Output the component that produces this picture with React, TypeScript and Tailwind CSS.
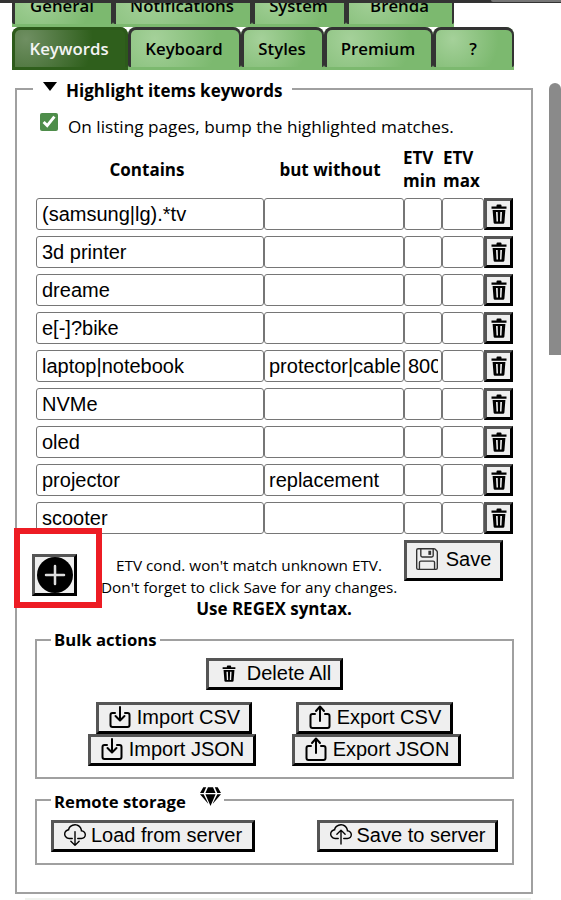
import type { ReactNode } from 'react';
import { BsCloudDownload, BsCloudUpload, BsFloppy } from 'react-icons/bs';
import { FaGem } from 'react-icons/fa';

const topTabs = [
  { label: 'General', width: 'w-[101px]' },
  { label: 'Notifications', width: 'w-[139px]' },
  { label: 'System', width: 'w-[94px]' },
  { label: 'Brenda', width: 'w-[108px]' },
];

const mainTabs = [
  { label: 'Keywords', width: 'w-[116px]', active: true },
  { label: 'Keyboard', width: 'w-[113px]' },
  { label: 'Styles', width: 'w-[83px]' },
  { label: 'Premium', width: 'w-[109px]' },
  { label: '?', width: 'w-[81px]' },
];

const keywords = [
  { contains: '(samsung|lg).*tv' },
  { contains: '3d printer' },
  { contains: 'dreame' },
  { contains: 'e[-]?bike' },
  { contains: 'laptop|notebook', without: 'protector|cable', min: '800' },
  { contains: 'NVMe' },
  { contains: 'oled' },
  { contains: 'projector', without: 'replacement' },
  { contains: 'scooter' },
];

function Tab({ label, width, active, height }: { label: string; width: string; active?: boolean; height: string }) {
  return (
    <div className={`${width} ${height} shrink-0 rounded-t-lg ${active ? 'bg-[#2f5f1c]' : 'bg-[#7cb96f]'}`}>
      <div
        className={
          active
            ? 'flex h-[calc(100%-3px)] items-center justify-center rounded-t-lg rounded-b-[2px] border-x-[3px] border-t-[3px] border-[#2c5a1a] bg-[radial-gradient(circle_at_10%_25%,#6f8f62,#2f5f1c_65%)] pr-[2px] text-[16.8px] font-semibold text-[#f4f4f4]'
            : 'flex h-[calc(100%-3px)] items-center justify-center rounded-t-lg rounded-b-[2px] border-r-[2px] border-l-[3px] border-t-[3px] border-[#333] bg-[radial-gradient(circle_at_22%_25%,#a5d19a,#7cb96f_70%)] pr-[2px] text-[16.8px] font-semibold text-black'
        }
      >
        {label}
      </div>
    </div>
  );
}

function Btn({ className, children }: { className: string; children: ReactNode }) {
  return (
    <button className={`flex shrink-0 items-center justify-center gap-[5px] border-[3px] border-t-[#555] border-r-black border-b-black border-l-[#555] bg-[#efefef] font-['Liberation_Sans',sans-serif] text-[20px] leading-none text-black ${className}`}>
      {children}
    </button>
  );
}

function TrashIcon({ className }: { className: string }) {
  return (
    <svg viewBox="0 0 16 20" className={className} fill="black">
      <path d="M5.5 1.5Q5.5 0.5 6.5 0.5H9.5Q10.5 0.5 10.5 1.5V2.5H15.5V4.8H0.5V2.5H5.5Z" />
      <path fillRule="evenodd" d="M1.6 6H14.4L13.4 18.5Q13.3 19.8 12 19.8H4Q2.7 19.8 2.6 18.5ZM5 8L5.5 17.5H7L6.7 8ZM9.3 8L9 17.5H10.5L11 8Z" />
    </svg>
  );
}

function ImportIcon() {
  return (
    <svg viewBox="0 0 24 24" className="size-[24px]" fill="none" stroke="black" strokeWidth="2" strokeLinecap="round" strokeLinejoin="round">
      <path d="M7 8H4.5A2 2 0 0 0 2.5 10V20A2 2 0 0 0 4.5 22H19.5A2 2 0 0 0 21.500 20V10A2 2 0 0 0 19.500 8H17" />
      <path d="M12 2V15M7.500 11L12 15.500L16.500 11" />
    </svg>
  );
}

function ExportIcon() {
  return (
    <svg viewBox="0 0 24 24" className="size-[24px]" fill="none" stroke="black" strokeWidth="2" strokeLinecap="round" strokeLinejoin="round">
      <path d="M7 9H4.500A2 2 0 0 0 2.500 11V21A2 2 0 0 0 4.500 23H19.500A2 2 0 0 0 21.500 21V11A2 2 0 0 0 19.500 9H17" />
      <path d="M12 16V2M8 6L12 1.500L16 6" />
    </svg>
  );
}

export default function App() {
  return (
    <div className="relative h-[900px] w-[561px] overflow-hidden bg-white font-['Open_Sans',sans-serif] text-black">
      {/* browser edge */}
      <div className="absolute top-0 left-0 h-[3px] w-full bg-[#333]" />
      <div className="absolute top-0 right-0 h-[2px] w-[70px] rounded-bl bg-[#777]" />

      {/* Tabs */}
      <div className="ml-[12px] flex h-[27px] items-end">
        {topTabs.map((tab) => (
          <Tab key={tab.label} label={tab.label} width={tab.width} height="h-[43px]" />
        ))}
      </div>
      <div className="ml-[12px] flex">
        {mainTabs.map((tab) => (
          <Tab key={tab.label} label={tab.label} width={tab.width} active={tab.active} height="h-[43px]" />
        ))}
      </div>

      {/* Keywords */}
      <fieldset className="mt-[7px] ml-[15px] h-[817px] w-[518px] border-2 border-[#a0a0a0]">
        <legend className="ml-[16px] flex h-[24px] items-center px-[10px] text-[17px] font-bold">
          <svg viewBox="0 0 14 9" className="mr-[9px] mb-[5px] h-[9px] w-[14px]">
            <path d="M0 0H14L7 9Z" fill="black" />
          </svg>
          <span className="pt-[4px]">Highlight items keywords</span>
        </legend>

        <div className="mt-[12px] ml-[23px] flex h-[22px] items-center gap-[10px] text-[17.2px]">
          <input type="checkbox" defaultChecked className="mb-[4px] size-[18px] accent-[#4e8d4a]" />
          <span className="pt-[6px]">On listing pages, bump the highlighted matches.</span>
        </div>

        <div className="mt-[10px] ml-[19px] grid h-[48px] grid-cols-[222px_144px_41px_42px] items-center text-center text-[17px] leading-[23px] font-bold">
          <div>Contains</div>
          <div>but without</div>
          <div className="pl-[1px] text-left">ETV<br />min</div>
          <div className="text-left">ETV<br />max</div>
        </div>

        <div className="mt-[5px] ml-[19px] flex flex-col gap-[6px]">
          {keywords.map((row) => (
            <div key={row.contains} className="grid h-[32px] grid-cols-[228px_140px_38px_42px_29px]">
              <input readOnly defaultValue={row.contains} className="min-w-0 rounded-[3px] border border-[#767676] pr-[2px] pl-[5px] font-['Liberation_Sans',sans-serif] text-[20px]" />
              <input readOnly defaultValue={row.without ?? ''} className="min-w-0 rounded-[3px] border border-[#767676] pr-[1px] pl-[4px] font-['Liberation_Sans',sans-serif] text-[20px]" />
              <input readOnly defaultValue={row.min ?? ''} className="min-w-0 rounded-[3px] border border-[#767676] px-[3px] font-['Liberation_Sans',sans-serif] text-[20px]" />
              <input readOnly className="min-w-0 rounded-[3px] border border-[#767676]" />
              <Btn className="w-[29px]">
                <TrashIcon className="h-[20px] w-[16px]" />
              </Btn>
            </div>
          ))}
        </div>

        <div className="flex h-[64px] items-start">
          <Btn className="mt-[20px] ml-[15px] h-[42px] w-[45px]">
            <svg viewBox="0 0 36 36" className="size-[36px]">
              <circle cx="18" cy="18" r="18" fill="black" />
              <path d="M18 9V27M9 18H27" stroke="#dddddd" strokeWidth="2.500" strokeLinecap="round" />
            </svg>
          </Btn>
          <div className="mt-[20px] ml-[24px] w-[296px] text-center text-[15.3px] leading-[22px] whitespace-nowrap">
            ETV cond. won't match unknown ETV.<br />
            Don't forget to click Save for any changes.
          </div>
          <Btn className="mt-[6px] ml-[7px] h-[41px] w-[99px] gap-[8px] pb-[4px]">
            <BsFloppy className="size-[22px] text-[#333]" />
            Save
          </Btn>
        </div>
        <div className="text-center text-[17px] leading-[22px] font-bold">Use REGEX syntax.</div>

        {/* Bulk actions */}
        <fieldset className="mt-[9px] ml-[18px] w-[479px] border-2 border-[#a0a0a0] pb-[11px]">
          <legend className="ml-[14px] flex h-[22px] items-center px-[3px] text-[16.7px] font-bold">Bulk actions</legend>
          <Btn className="mx-auto mt-[7px] h-[32px] w-[137px] gap-[11px] pb-[2px] pl-[4px]">
            <TrashIcon className="h-[17px] w-[14px]" />
            Delete All
          </Btn>
          <div className="mt-[12px] flex">
            <Btn className="ml-[59px] h-[32px] w-[156px] pb-[2px]"><ImportIcon />Import CSV</Btn>
            <Btn className="ml-[44px] h-[32px] w-[157px] pb-[2px]"><ExportIcon />Export CSV</Btn>
          </div>
          <div className="mt-[0px] flex">
            <Btn className="ml-[51px] h-[32px] w-[168px] pb-[2px]"><ImportIcon />Import JSON</Btn>
            <Btn className="ml-[36px] h-[32px] w-[169px] pb-[2px]"><ExportIcon />Export JSON</Btn>
          </div>
        </fieldset>

        {/* Remote storage */}
        <fieldset className="mt-[10px] ml-[18px] w-[479px] border-2 border-[#a0a0a0] pb-[11px]">
          <legend className="ml-[14px] flex h-[22px] items-center px-[3px] text-[16.7px] font-bold">
            <span className="pt-[3px]">Remote storage</span>
            <FaGem className="mb-[8px] ml-[14px] size-[21px]" />
          </legend>
          <div className="mt-[9px] flex">
            <Btn className="ml-[14px] h-[32px] w-[204px] pb-[2px]"><BsCloudDownload className="size-[22px]" />Load from server</Btn>
            <Btn className="ml-[62px] h-[32px] w-[181px] pb-[2px]"><BsCloudUpload className="size-[22px]" />Save to server</Btn>
          </div>
        </fieldset>
      </fieldset>

      {/* annotation around the add button */}
      <div className="absolute top-[528px] left-[14px] h-[80px] w-[88px] border-[6px] border-[#ed1c24]" />

      {/* scrollbar thumb */}
      <div className="absolute top-[83px] right-0 h-[272px] w-[12px] rounded-t-[6px] bg-[#8a8a8a]" />

      <div className="absolute right-[30px] bottom-0 left-[25px] h-[2px] bg-[#f0f3ef]" />
    </div>
  );
}
